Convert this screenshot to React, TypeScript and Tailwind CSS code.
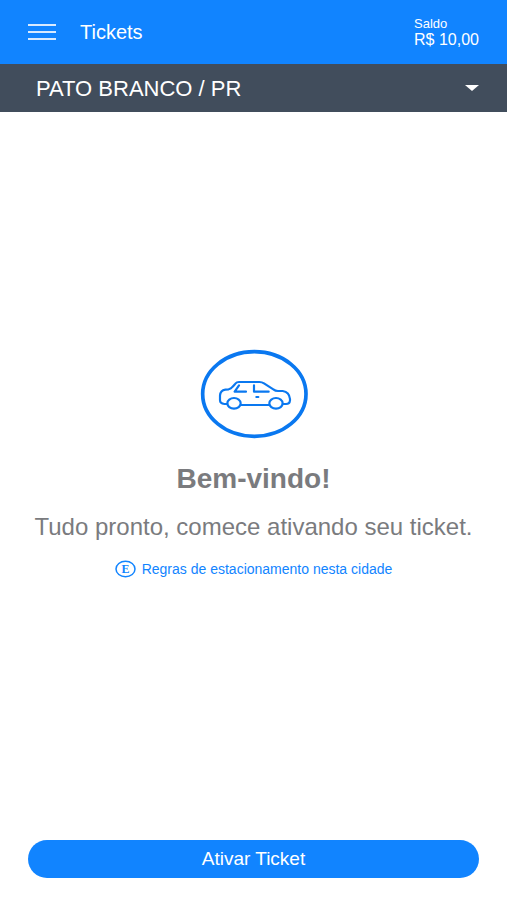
import { useState } from "react";

const CITIES = ["PATO BRANCO / PR"];

function CarIcon() {
  return (
    <svg width="108" height="90" viewBox="30 30 324 270" fill="none" stroke="#0a78f0" aria-hidden="true">
      <ellipse cx="193" cy="165" rx="155" ry="127" strokeWidth="11" />
      <g strokeWidth="6.5" strokeLinecap="round" strokeLinejoin="round">
        <path d="M112 195H103Q90 194 90 184V170Q91 154 106 152L116 151Q123 149 128 143L136 134Q140 129 147 129H208Q216 129 222 133L250 151Q256 156 264 156H278Q298 159 300 180V184Q299 195 288 195H278" />
        <path d="M152 198H238" />
        <ellipse cx="132" cy="193" rx="20" ry="16" />
        <ellipse cx="258" cy="193" rx="20" ry="16" />
        <path d="M147 139L134 158H168M192 139V158H236M199 174H205" />
      </g>
    </svg>
  );
}

export default function App() {
  const [city, setCity] = useState(CITIES[0]);

  return (
    <div className="flex min-h-screen flex-col bg-white font-['Liberation_Sans',Arial,sans-serif]">
      <header className="flex h-16 items-center bg-[#1184ff] px-7 text-white">
        <button type="button" aria-label="Menu" className="flex flex-col gap-[5px]">
          <span className="h-0.5 w-7 bg-[#d8eaff]" />
          <span className="h-0.5 w-7 bg-[#d8eaff]" />
          <span className="h-0.5 w-7 bg-[#d8eaff]" />
        </button>
        <h1 className="ml-6 text-[20px] leading-6">Tickets</h1>
        <div className="ml-auto">
          <p className="text-[13px] leading-4">Saldo</p>
          <p className="text-[16px] leading-4">R$ 10,00</p>
        </div>
      </header>

      <div className="relative bg-[#414d5c]">
        <select
          aria-label="Cidade"
          value={city}
          onChange={(e) => setCity(e.target.value)}
          className="block h-12 w-full appearance-none bg-transparent px-9 text-[22px] text-white"
        >
          {CITIES.map((name) => (
            <option key={name} value={name} className="text-gray-900">
              {name}
            </option>
          ))}
        </select>
        <svg
          width="14"
          height="6"
          viewBox="0 0 14 6"
          className="pointer-events-none absolute top-1/2 right-7 -translate-y-1/2 fill-white"
          aria-hidden="true"
        >
          <path d="M0 0H14L7 6Z" />
        </svg>
      </div>

      <main className="flex flex-1 flex-col items-center justify-center px-4 pb-6 text-center text-[#7a7b7e]">
        <CarIcon />
        <h2 className="mt-6 text-[28px] leading-8 font-bold">Bem-vindo!</h2>
        <p className="mt-4 text-[24px] leading-8">Tudo pronto, comece ativando seu ticket.</p>
        <a href="#regras" className="mt-4 flex items-center gap-1.5 text-[14px] leading-5 text-[#1184ff]">
          <svg width="21" height="18" viewBox="0 0 21 18" aria-hidden="true">
            <ellipse cx="10.5" cy="9" rx="9.5" ry="7.8" fill="none" stroke="currentColor" strokeWidth="1.5" />
            <text
              x="10.5"
              y="13"
              textAnchor="middle"
              fill="currentColor"
              className="font-['Liberation_Serif',serif] text-[12px] font-bold"
            >
              E
            </text>
          </svg>
          Regras de estacionamento nesta cidade
        </a>
      </main>

      <footer className="px-7 pb-[22px]">
        <button type="button" className="block h-[38px] w-full rounded-full bg-[#1184ff] text-[19px] text-white">
          Ativar Ticket
        </button>
      </footer>
    </div>
  );
}
